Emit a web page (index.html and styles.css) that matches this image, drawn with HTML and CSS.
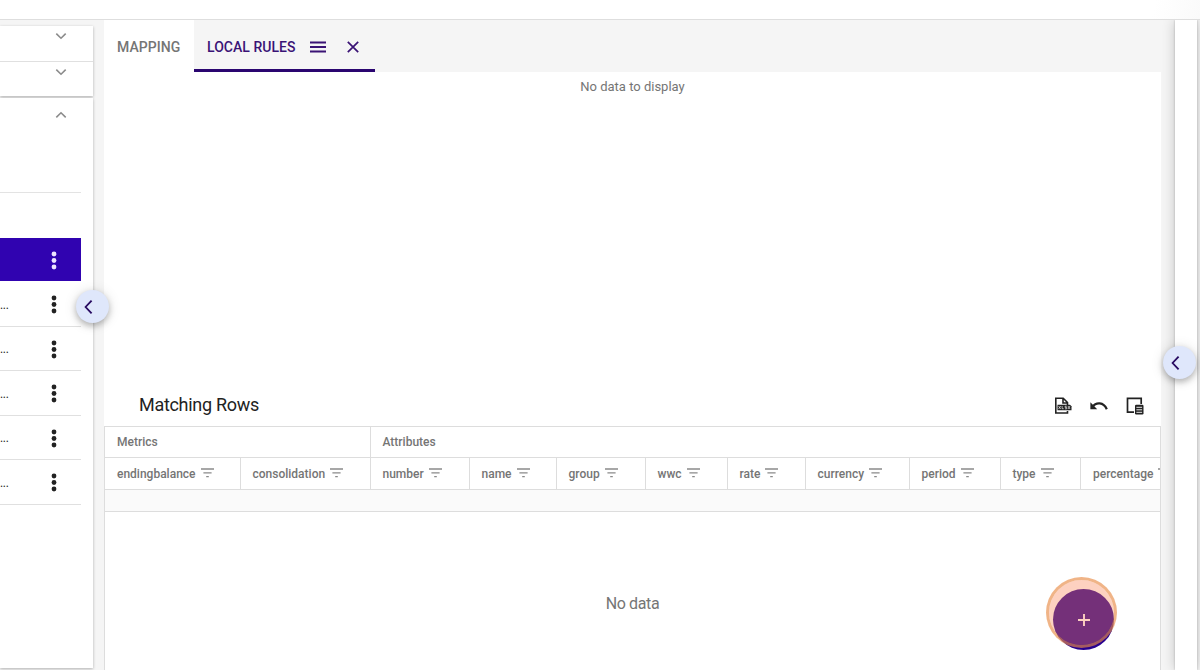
FILE: index.html
```html
<!DOCTYPE html>
<html lang="en">
<head>
<meta charset="utf-8">
<title>Local Rules</title>
<link rel="stylesheet" href="styles.css">
</head>
<body>
<svg class="defs" width="0" height="0">
  <symbol id="filter" viewBox="0 0 13 10"><path d="M0 1h13M2.400 4.900h8.200M5.200 8.600h2.600" fill="none" stroke="currentColor" stroke-width="1.300"/></symbol>
  <symbol id="dots" viewBox="0 0 6 19"><circle cx="3" cy="3" r="2.400"/><circle cx="3" cy="9.500" r="2.400"/><circle cx="3" cy="16" r="2.400"/></symbol>
  <symbol id="down" viewBox="0 0 12 8"><path d="M1.300 1.600 6 6.200l4.700-4.600" fill="none" stroke="currentColor" stroke-width="1.600"/></symbol>
  <symbol id="left" viewBox="0 0 9 14"><path d="M7.600 .6 1.600 7l6 6.400" fill="none" stroke="currentColor" stroke-width="1.800"/></symbol>
</svg>
<header class="topbar"></header>
<div class="shell">
  <aside class="sidebar">
    <section class="panel collapsed">
      <div class="fold"><svg class="chevron"><use href="#down"/></svg></div>
      <div class="fold"><svg class="chevron"><use href="#down"/></svg></div>
    </section>
    <section class="panel expanded">
      <div class="fold-head"><svg class="chevron up"><use href="#down"/></svg></div>
      <ul class="rules">
        <li class="rule active"><span></span><svg class="dots"><use href="#dots"/></svg></li>
        <li class="rule"><span>...</span><svg class="dots"><use href="#dots"/></svg></li>
        <li class="rule"><span>...</span><svg class="dots"><use href="#dots"/></svg></li>
        <li class="rule"><span>...</span><svg class="dots"><use href="#dots"/></svg></li>
        <li class="rule"><span>...</span><svg class="dots"><use href="#dots"/></svg></li>
        <li class="rule"><span>...</span><svg class="dots"><use href="#dots"/></svg></li>
      </ul>
    </section>
    <button class="toggle toggle-left"><svg><use href="#left"/></svg></button>
  </aside>
  <main class="content">
    <nav class="tabs">
      <div class="tab"><span>MAPPING</span></div>
      <div class="tab current"><span>LOCAL RULES</span>
        <svg class="menu" viewBox="0 0 16 12"><path d="M0 1.500h16M0 6h16M0 10.500h16" stroke="currentColor" stroke-width="1.900"/></svg>
        <svg class="close" viewBox="0 0 12 12"><path d="m.8.8 10.400 10.400M11.200.8.8 11.200" stroke="currentColor" stroke-width="1.700"/></svg>
      </div>
    </nav>
    <div class="upper">No data to display</div>
    <div class="toolbar">
      <h2>Matching Rows</h2>
      <div class="actions">
        <svg class="xlsx" viewBox="0 0 18 18"><path d="M5 16H1.800V1.200h7.400l4.300 4.300V8M9 1.500v4.500h4.500M5 16h8.500v-2" fill="none" stroke="currentColor" stroke-width="1.600"/><path d="M3.500 7.700H16l1.500 1.500v4H3.500z" fill="currentColor"/><path d="m4.600 9 2.100 3M6.700 9l-2.100 3M8.100 9v2.700h1.600M12.700 9.200h-1.600v1.200h1.600v1.400H11M14 9l2 3M16 9l-2 3" fill="none" stroke="#fff" stroke-width=".65"/></svg>
        <svg class="undo" viewBox="0 0 18 10"><path d="M2.500 6C6 .8 13.500.9 16.800 8.200" fill="none" stroke="currentColor" stroke-width="2.200"/><path d="M.4 1.200v7h6.800z" fill="currentColor"/></svg>
        <svg class="chooser" viewBox="0 0 18 18"><path d="M15.200 7V1.300H1.500v13.900H8" fill="none" stroke="currentColor" stroke-width="1.700"/><rect x="9" y="7.700" width="8.500" height="9.800" rx="1.200" fill="currentColor"/><path d="M10.400 10.300h5.700M10.400 12.800h5.700M10.400 15.300h5.700" stroke="#fff" stroke-width=".9"/></svg>
      </div>
    </div>
    <section class="grid">
      <div class="bands"><div>Metrics</div><div>Attributes</div></div>
      <div class="columns">
        <div>endingbalance<svg><use href="#filter"/></svg></div>
        <div>consolidation<svg><use href="#filter"/></svg></div>
        <div>number<svg><use href="#filter"/></svg></div>
        <div>name<svg><use href="#filter"/></svg></div>
        <div>group<svg><use href="#filter"/></svg></div>
        <div>wwc<svg><use href="#filter"/></svg></div>
        <div>rate<svg><use href="#filter"/></svg></div>
        <div>currency<svg><use href="#filter"/></svg></div>
        <div>period<svg><use href="#filter"/></svg></div>
        <div>type<svg><use href="#filter"/></svg></div>
        <div>percentage<svg><use href="#filter"/></svg></div>
      </div>
      <div class="blank-row"></div>
      <div class="empty">No data</div>
    </section>
  </main>
  <aside class="drawer"><button class="toggle toggle-right"><svg><use href="#left"/></svg></button></aside>
</div>
<button class="add"><svg viewBox="0 0 12 12"><path d="M6 0v12M0 6h12" stroke="currentColor" stroke-width="1.900"/></svg></button>
<div class="click-ring"></div>
</body>
</html>
```
FILE: styles.css
```css
* { box-sizing: border-box; }
body { margin: 0; height: 670px; overflow: hidden; position: relative; display: flex; flex-direction: column; font-family: Roboto, "Liberation Sans", sans-serif; background: #fff; color: #757575; }
.defs { position: absolute; }
svg { display: block; flex: none; }
button { border: 0; padding: 0; }
.topbar { height: 20px; flex: none; border-bottom: 1px solid #dedede; background: linear-gradient(100deg, #fff 96%, #fafafa); }
.shell { flex: 1; min-height: 0; display: flex; background: #f5f5f5; overflow: hidden; }
.sidebar { position: relative; width: 104px; flex: none; padding: 6px 11px 2px 0; display: flex; flex-direction: column; gap: 2px; }
.panel { background: #fff; box-shadow: 0 1px 3px rgba(0,0,0,.28); }
.collapsed { height: 70px; flex: none; }
.fold { height: 35px; padding: 6px 0 0 54.5px; }
.fold + .fold { border-top: 1px solid #e0e0e0; }
.chevron { width: 12px; height: 8px; color: #8c8c8c; }
.up { transform: rotate(180deg); }
.expanded { flex: 1; padding-right: 12px; }
.fold-head { height: 95px; padding: 13px 0 0 54.5px; border-bottom: 1px solid #e3e3e3; }
.rules { list-style: none; margin: 45px 0 0; padding: 0; }
.rule { height: 44.5px; display: flex; align-items: center; justify-content: space-between; padding: 2px 24px 0 0; border-bottom: 1px solid #e0e0e0; color: #222; font-size: 12px; }
.rule span { letter-spacing: -.3px; }
.dots { width: 6px; height: 19px; fill: currentColor; }
.active { height: 44px; background: #3003b0; color: #eee4ff; border-color: #fff; }
.toggle { position: absolute; z-index: 3; width: 33px; height: 33px; border-radius: 50%; background: #dfe7fb; color: #280a61; display: grid; place-items: center; padding-right: 9px; box-shadow: 0 3px 6px rgba(0,0,0,.25), 0 1px 14px rgba(0,0,0,.12); }
.toggle svg { width: 9px; height: 14px; }
.toggle-left { left: 76px; top: 270px; }
.toggle-right { left: -12px; top: 326px; padding-right: 8px; }
.content { width: 1057px; flex: none; background: #fff; display: flex; flex-direction: column; overflow: hidden; }
.tabs { height: 52px; flex: none; display: flex; background: #f5f5f5; font-size: 14px; font-weight: 500; }
.tab { width: 90px; padding: 1px 0 0 13px; background: #fff; display: flex; align-items: center; white-space: nowrap; }
.current { width: 181px; background: #f5f5f5; color: #3a1375; border-bottom: 3px solid #2a0570; padding-top: 4px; }
.tab span { letter-spacing: .04px; }
.menu { width: 16px; height: 12px; margin-left: 14.500px; }
.close { width: 12px; height: 12px; margin: 1px 0 0 21px; }
.upper { height: 310px; flex: none; padding-top: 6.500px; text-align: center; font-size: 13px; line-height: 16px; }
.toolbar { height: 44px; flex: none; display: flex; align-items: center; justify-content: space-between; padding: 0 17px 0 35px; }
h2 { margin: 0; font-size: 18px; font-weight: 400; letter-spacing: -.3px; color: #222; }
.actions { display: flex; align-items: center; gap: 18px; color: #222; padding-top: 3px; }
.xlsx, .chooser { width: 18px; height: 18px; }
.undo { width: 18px; height: 10px; }
.grid { flex: 1; display: flex; flex-direction: column; border: 1px solid #ddd; border-bottom: 0; font-size: 12px; font-weight: 500; }
.bands { height: 31px; flex: none; display: grid; grid-template-columns: 264.500px 1fr; border-bottom: 1px solid #ddd; line-height: 30px; }
.bands div { padding-left: 12px; }
.bands div + div { border-left: 1px solid #ddd; }
.columns { height: 32px; flex: none; display: grid; grid-template-columns: 134.500px 130px 99px 87px 89px 82px 78px 104px 91px 80.500px 80px; border-bottom: 1px solid #ddd; overflow: hidden; }
.columns div { min-width: 0; overflow: hidden; display: flex; align-items: center; gap: 5px; padding-left: 12px; }
.columns div + div { border-left: 1px solid #ddd; }
.columns svg { width: 13px; height: 10px; color: #8a8a8a; margin-top: -2px; }
.blank-row { height: 22px; flex: none; border-bottom: 1px solid #ddd; background: #fafafa; }
.empty { padding-top: 82px; text-align: center; font-size: 16px; line-height: 19px; font-weight: 400; letter-spacing: -.35px; }
.drawer { position: relative; width: 22px; margin-left: 13.500px; flex: none; background: #fff; box-shadow: 0 0 2px rgba(0,0,0,.22), 0 0 14px rgba(0,0,0,.2); }
.add { position: absolute; left: 1053px; top: 589px; width: 61px; height: 61px; border-radius: 50%; background: #27008f; color: #fff; display: grid; place-items: center; }
.add svg { width: 12px; height: 12px; }
.click-ring { position: absolute; left: 1045.500px; top: 576.500px; width: 71px; height: 71px; border-radius: 50%; background: rgba(250,130,85,.37); background-clip: padding-box; border: 3px solid rgba(232,140,70,.65); }
```
